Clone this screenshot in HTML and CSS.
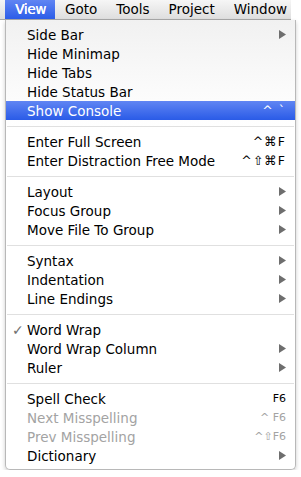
FILE: index.html
```html
<!DOCTYPE html>
<html lang="en">
<head>
    <meta charset="UTF-8">
    <title>View menu</title>
    <link rel="stylesheet" href="styles.css">
</head>
<body>
    <div class="menubar">
        <span class="menu-title active">View</span>
        <span class="menu-title">Goto</span>
        <span class="menu-title">Tools</span>
        <span class="menu-title">Project</span>
        <span class="menu-title">Window</span>
    </div>

    <div class="dropdown">
        <div class="item"><span class="label">Side Bar</span><svg class="arrow" viewBox="0 0 7 9"><polygon points="0,0 7,4.5 0,9"/></svg></div>
        <div class="item"><span class="label">Hide Minimap</span></div>
        <div class="item"><span class="label">Hide Tabs</span></div>
        <div class="item"><span class="label">Hide Status Bar</span></div>
        <div class="item selected"><span class="label">Show Console</span><span class="keys">^ `</span></div>
        <div class="sep"></div>
        <div class="item"><span class="label">Enter Full Screen</span><span class="keys">^⌘F</span></div>
        <div class="item"><span class="label">Enter Distraction Free Mode</span><span class="keys">^⇧⌘F</span></div>
        <div class="sep"></div>
        <div class="item"><span class="label">Layout</span><svg class="arrow" viewBox="0 0 7 9"><polygon points="0,0 7,4.5 0,9"/></svg></div>
        <div class="item"><span class="label">Focus Group</span><svg class="arrow" viewBox="0 0 7 9"><polygon points="0,0 7,4.5 0,9"/></svg></div>
        <div class="item"><span class="label">Move File To Group</span><svg class="arrow" viewBox="0 0 7 9"><polygon points="0,0 7,4.5 0,9"/></svg></div>
        <div class="sep"></div>
        <div class="item"><span class="label">Syntax</span><svg class="arrow" viewBox="0 0 7 9"><polygon points="0,0 7,4.5 0,9"/></svg></div>
        <div class="item"><span class="label">Indentation</span><svg class="arrow" viewBox="0 0 7 9"><polygon points="0,0 7,4.5 0,9"/></svg></div>
        <div class="item"><span class="label">Line Endings</span><svg class="arrow" viewBox="0 0 7 9"><polygon points="0,0 7,4.5 0,9"/></svg></div>
        <div class="sep"></div>
        <div class="item checked"><span class="check">✓</span><span class="label">Word Wrap</span></div>
        <div class="item"><span class="label">Word Wrap Column</span><svg class="arrow" viewBox="0 0 7 9"><polygon points="0,0 7,4.5 0,9"/></svg></div>
        <div class="item"><span class="label">Ruler</span><svg class="arrow" viewBox="0 0 7 9"><polygon points="0,0 7,4.5 0,9"/></svg></div>
        <div class="sep"></div>
        <div class="item"><span class="label">Spell Check</span><span class="keys small">F6</span></div>
        <div class="item disabled"><span class="label">Next Misspelling</span><span class="keys small">^ F6</span></div>
        <div class="item disabled"><span class="label">Prev Misspelling</span><span class="keys small">^⇧F6</span></div>
        <div class="item"><span class="label">Dictionary</span><svg class="arrow" viewBox="0 0 7 9"><polygon points="0,0 7,4.5 0,9"/></svg></div>
    </div>
</body>
</html>
```
FILE: styles.css
```css
body {
    margin: 0;
    background: #fff;
    font-family: "DejaVu Sans", sans-serif;
    font-size: 13.5px;
    color: #000;
}

.menubar {
    width: 291px;
    height: 20px;
    display: flex;
    align-items: center;
    background: linear-gradient(#f6f6f6, #dedede);
    border-bottom: 1px solid #a8a8a8;
    box-sizing: border-box;
    padding-left: 5px;
    font-size: 13.5px;
}

.menu-title {
    flex: none;
    height: 100%;
    line-height: 19px;
    padding: 0 9px 0 10px;
    white-space: nowrap;
}

.menu-title.active {
    width: 50px;
    box-sizing: border-box;
    padding: 0 0 0 1px;
    text-align: center;
    letter-spacing: -0.3px;
    background: linear-gradient(#6085f3, #2c5de8);
    color: #fff;
    text-shadow: 0.4px 0 0 #fff;
}

.dropdown {
    margin-left: 5px;
    width: 291px;
    box-sizing: border-box;
    padding: 5px 0 4px;
    background: linear-gradient(#f1f1f1 0, #fbfbfb 70px, #fff 110px);
    border: 1px solid #b8b8b8;
    border-top: none;
    border-radius: 0 0 5px 5px;
    box-shadow: 0 2px 4px rgba(0, 0, 0, 0.2);
}

.item {
    height: 19px;
    display: flex;
    align-items: center;
    padding: 0 9px 0 21px;
    position: relative;
}

.item .label {
    flex: 1;
}

.item.selected {
    background: linear-gradient(#6085f3, #2a5be7);
    color: #fff;
}

.item.disabled {
    color: #a3a3a3;
}

.keys {
    font-size: 12.5px;
    letter-spacing: 1px;
}

.keys.small {
    font-size: 11px;
    letter-spacing: 0;
    color: #000;
}

.disabled .keys.small {
    color: #a3a3a3;
}

.arrow {
    width: 7px;
    height: 9px;
    fill: #6e6e6e;
}

.check {
    position: absolute;
    left: 6px;
    color: #707070;
    font-size: 14px;
}

.sep {
    height: 1px;
    background: #e0e0e0;
    margin: 6px 1px 5px;
}
```
